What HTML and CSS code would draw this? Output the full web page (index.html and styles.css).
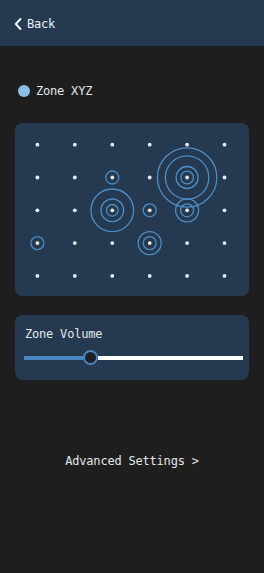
FILE: index.html
```html
<!DOCTYPE html>
<html>
<head>
<meta charset="utf-8">
<link rel="stylesheet" href="styles.css">
</head>
<body>
<header class="topbar">
  <svg class="chev" width="8" height="12" viewBox="0 0 8 12"><path d="M6.5 1 L1.8 6 L6.5 11" fill="none" stroke="#eef2f6" stroke-width="2" stroke-linecap="round" stroke-linejoin="round"/></svg>
  <span class="back">Back</span>
</header>

<div class="zone-row">
  <span class="zone-dot"></span>
  <span class="zone-name">Zone XYZ</span>
</div>

<section class="grid-card">
  <svg width="234" height="173" viewBox="0 0 234 173">
    <g fill="none" stroke="#4f8cc4" stroke-width="1.3">
      <circle cx="97.3" cy="54.5" r="6.5"/>
      <circle cx="172.1" cy="54.5" r="6.3"/>
      <circle cx="172.1" cy="54.5" r="11"/>
      <circle cx="172.1" cy="54.5" r="21.7"/>
      <circle cx="172.1" cy="54.5" r="29.7"/>
      <circle cx="97.3" cy="87.3" r="5.8"/>
      <circle cx="97.3" cy="87.3" r="11.3"/>
      <circle cx="97.3" cy="87.3" r="21.3"/>
      <circle cx="134.7" cy="87.3" r="6.5"/>
      <circle cx="172.1" cy="87.3" r="6.5"/>
      <circle cx="172.1" cy="87.3" r="11.5"/>
      <circle cx="22.4" cy="120.1" r="6.5"/>
      <circle cx="134.7" cy="120.1" r="6.5"/>
      <circle cx="134.7" cy="120.1" r="11.5"/>
    </g>
    <g fill="#e4eaf0">
      <circle cx="22.4" cy="21.7" r="1.9"/><circle cx="59.8" cy="21.7" r="1.9"/><circle cx="97.3" cy="21.7" r="1.9"/><circle cx="134.7" cy="21.7" r="1.9"/><circle cx="172.1" cy="21.7" r="1.9"/><circle cx="209.5" cy="21.7" r="1.9"/>
      <circle cx="22.4" cy="54.5" r="1.9"/><circle cx="59.8" cy="54.5" r="1.9"/><circle cx="97.3" cy="54.5" r="1.9"/><circle cx="134.7" cy="54.5" r="1.9"/><circle cx="172.1" cy="54.5" r="1.9"/><circle cx="209.5" cy="54.5" r="1.9"/>
      <circle cx="22.4" cy="87.3" r="1.9"/><circle cx="59.8" cy="87.3" r="1.9"/><circle cx="97.3" cy="87.3" r="1.9"/><circle cx="134.7" cy="87.3" r="1.9"/><circle cx="172.1" cy="87.3" r="1.9"/><circle cx="209.5" cy="87.3" r="1.9"/>
      <circle cx="22.4" cy="120.1" r="1.9"/><circle cx="59.8" cy="120.1" r="1.9"/><circle cx="97.3" cy="120.1" r="1.9"/><circle cx="134.7" cy="120.1" r="1.9"/><circle cx="172.1" cy="120.1" r="1.9"/><circle cx="209.5" cy="120.1" r="1.9"/>
      <circle cx="22.4" cy="152.9" r="1.9"/><circle cx="59.8" cy="152.9" r="1.9"/><circle cx="97.3" cy="152.9" r="1.9"/><circle cx="134.7" cy="152.9" r="1.9"/><circle cx="172.1" cy="152.9" r="1.9"/><circle cx="209.5" cy="152.9" r="1.9"/>
    </g>
  </svg>
</section>

<section class="volume-card">
  <div class="volume-title">Zone Volume</div>
  <div class="slider">
    <div class="fill"></div>
    <div class="thumb"></div>
    <div class="rest"></div>
  </div>
</section>

<div class="advanced">Advanced Settings &gt;</div>
</body>
</html>
```

FILE: styles.css
```css
html, body {
  margin: 0;
  padding: 0;
  background: #1e1e1e;
  width: 264px;
  height: 573px;
  overflow: hidden;
  font-family: "DejaVu Sans Mono", "Liberation Mono", monospace;
  font-size: 12px;
  letter-spacing: -0.2px;
  color: #e2e6ea;
}

.topbar {
  height: 46px;
  background: #253a51;
  display: flex;
  align-items: center;
  padding: 2px 0 0 14px;
  gap: 5px;
  box-sizing: border-box;
}

.chev {
  display: block;
}

.back {
  color: #eef2f6;
  line-height: 14px;
}

.zone-row {
  display: flex;
  align-items: center;
  margin-top: 38px;
  padding-left: 18px;
  gap: 6px;
  height: 14px;
}

.zone-dot {
  width: 12px;
  height: 12px;
  border-radius: 50%;
  background: #8cbde6;
}

.zone-name {
  line-height: 14px;
}

.grid-card {
  margin: 25px 0 0 15px;
  width: 234px;
  height: 173px;
  background: #253a50;
  border-radius: 8px;
  overflow: hidden;
}

.grid-card svg {
  display: block;
}

.volume-card {
  margin: 19px 0 0 15px;
  width: 234px;
  height: 65px;
  background: #253a50;
  border-radius: 8px;
  box-sizing: border-box;
  padding: 11px 6px 0 9px;
}

.volume-title {
  line-height: 16px;
  padding-left: 1px;
}

.slider {
  display: flex;
  align-items: center;
  height: 15px;
  margin-top: 8px;
}

.fill {
  width: 59px;
  height: 4px;
  background: #4a86bf;
}

.thumb {
  width: 15px;
  height: 15px;
  box-sizing: border-box;
  border-radius: 50%;
  border: 2px solid #4a86bf;
  background: #1b2129;
}

.rest {
  flex: 1;
  height: 4px;
  background: #ffffff;
}

.advanced {
  margin-top: 74px;
  text-align: center;
  line-height: 14px;
  color: #e2e6ea;
}
```
